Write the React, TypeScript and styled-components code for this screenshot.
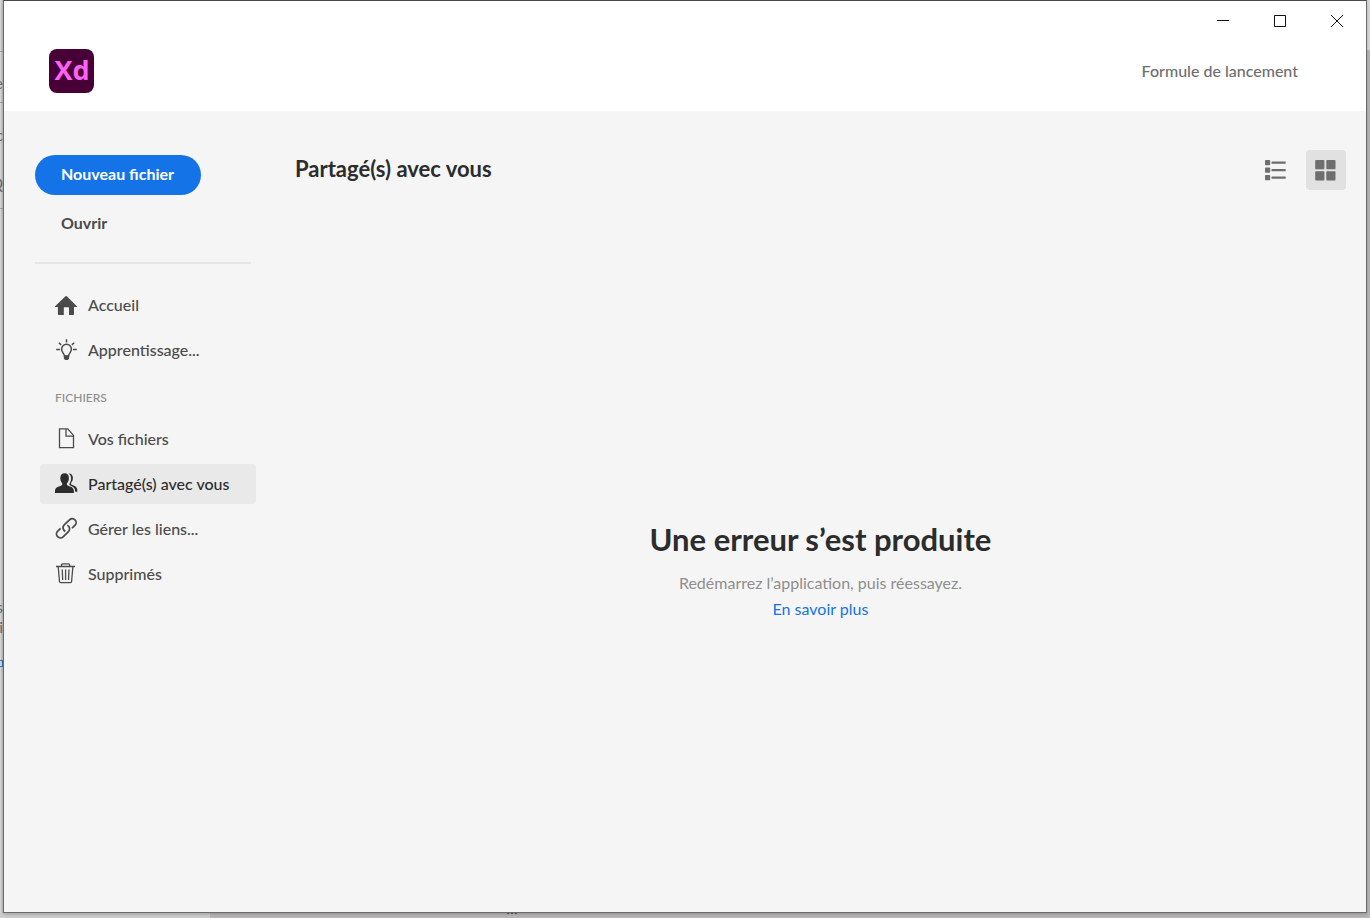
import React from 'react';
import styled, { createGlobalStyle } from 'styled-components';

const GlobalStyle = createGlobalStyle`
  *, *::before, *::after { box-sizing: border-box; }
  html, body { margin: 0; padding: 0; }
  body {
    font-family: Lato, "Open Sans", sans-serif;
    font-size: 16px;
    line-height: 20px;
    color: #4b4b4b;
  }
  button { font: inherit; color: inherit; border: 0; padding: 0; background: none; cursor: pointer; }
  h1, h2, p, ul { margin: 0; padding: 0; }
  svg { display: block; }
`;

const Desktop = styled.div`
  display: grid;
  grid-template-columns: 3px minmax(0, 1fr) 3px;
  grid-template-rows: minmax(0, 1fr) 5px;
  min-height: 100vh;
  overflow: hidden;
  background: #bdbbbc;
`;

const BehindLeft = styled.div`
  display: flex;
  flex-direction: column;
  overflow: hidden;
  background: linear-gradient(90deg, #dedede, #bfbfbf);
`;

const Slice = styled.div<{ $height: number; $line?: boolean }>`
  display: flex;
  flex: none;
  align-items: center;
  justify-content: flex-end;
  height: ${(p) => p.$height}px;
  border-bottom: ${(p) => (p.$line ? '1px solid #a3a3a3' : '0')};
  color: #6e6e6e;
  font-size: 16px;
`;

const FieldEdge = styled.div`
  flex: none;
  height: 7px;
  border: 1px solid #3d78b4;
  border-left: 0;
`;

const BehindRight = styled.div`
  background: linear-gradient(#dcdcdc 0 50px, #b9b9b9 50px);
`;

const BehindBottom = styled.div`
  grid-column: 1 / -1;
  display: flex;
  background: linear-gradient(90deg, #cecece 0 210px, #b9b7b8 210px);
`;

const Dots = styled.span`
  width: 10px;
  height: 1px;
  margin-left: 507px;
  background: repeating-linear-gradient(90deg, #555 0 2px, transparent 2px 4px);
`;

const Window = styled.div`
  display: flex;
  flex-direction: column;
  border: 1px solid #6b6b6b;
  border-top-color: #484848;
  background: #f5f5f5;
  box-shadow: 0 1px 4px rgba(0, 0, 0, 0.25);
  z-index: 1;
`;

const Header = styled.header`
  background: #fff;
`;

const WindowControls = styled.div`
  display: flex;
  justify-content: flex-end;
  height: 40px;
  padding-right: 1px;
`;

const WindowButton = styled.button`
  display: grid;
  place-items: center;
  width: 57px;
  height: 40px;
`;

const Brand = styled.div`
  display: flex;
  align-items: center;
  justify-content: space-between;
  height: 70px;
  padding: 0 68px 10px 45px;
`;

const PlanButton = styled.button`
  color: #6e6e6e;
  font-weight: 500;
`;

const Body = styled.div`
  display: flex;
  flex: 1;
`;

const Sidebar = styled.aside`
  flex: none;
  width: 252px;
  padding: 44px 0 0 31px;
`;

const NewFileButton = styled.button`
  display: block;
  height: 40px;
  padding: 0 27px 3px 26px;
  border-radius: 20px;
  background: #1473e6;
  color: #fff;
  font-weight: 700;
`;

const OpenButton = styled.button`
  display: block;
  margin: 18px 26px 29px;
  font-weight: 700;
`;

const Divider = styled.hr`
  width: 216px;
  height: 2px;
  margin: 0 0 21px;
  border: 0;
  background: #e6e6e6;
`;

const NavList = styled.ul`
  display: flex;
  flex-direction: column;
  gap: 5px;
  margin-left: 5px;
  list-style: none;
`;

const NavLink = styled.a<{ $active?: boolean }>`
  display: flex;
  align-items: center;
  gap: 10px;
  width: 216px;
  height: 40px;
  padding-left: 14px;
  border-radius: 4px;
  background: ${(p) => (p.$active ? '#e9e9e9' : 'transparent')};
  color: ${(p) => (p.$active ? '#2c2c2c' : '#4b4b4b')};
  font-weight: 500;
  text-decoration: none;
`;

const SectionLabel = styled.h2`
  margin: 18px 0 11px 20px;
  color: #8e8e8e;
  font-size: 12px;
  font-weight: 500;
  line-height: 20px;
`;

const Main = styled.main`
  display: flex;
  flex: 1;
  flex-direction: column;
  padding: 39px 20px 0 39px;
`;

const Toolbar = styled.div`
  display: flex;
  align-items: center;
  justify-content: space-between;
  height: 40px;
`;

const Title = styled.h1`
  padding-bottom: 2px;
  color: #2c2c2c;
  font-size: 22px;
  font-weight: 700;
  line-height: 28px;
`;

const ViewSwitch = styled.div`
  display: flex;
  gap: 10px;
`;

const ViewButton = styled.button<{ $active?: boolean }>`
  display: grid;
  place-items: center;
  width: 40px;
  height: 40px;
  border-radius: 4px;
  background: ${(p) => (p.$active ? '#e1e1e1' : 'transparent')};
  color: #6e6e6e;
`;

const ErrorState = styled.section`
  display: flex;
  flex: 1;
  flex-direction: column;
  align-items: center;
  justify-content: center;
  padding-top: 39px;
  text-align: center;
`;

const ErrorTitle = styled.h2`
  margin-bottom: 11px;
  color: #2c2c2c;
  font-size: 31px;
  font-weight: 700;
  line-height: 40px;
`;

const ErrorText = styled.p`
  color: #8e8e8e;
  font-size: 16px;
  line-height: 26px;
`;

const MoreLink = styled.a`
  color: #1473e6;
  line-height: 26px;
  text-decoration: none;
`;

const XdLogo = () => (
  <svg width="45" height="44" viewBox="0 0 45 44" role="img" aria-label="Adobe XD">
    <rect width="45" height="44" rx="8" fill="#470137" />
    <text x="23" y="31" textAnchor="middle" fontFamily="Open Sans, sans-serif" fontSize="27" fontWeight="700" fill="#ff61f6">Xd</text>
  </svg>
);

const Icon = ({ children }: { children: React.ReactNode }) => (
  <svg width="24" height="24" viewBox="0 0 24 24" fill="none" stroke="currentColor" strokeWidth="1.3" aria-hidden="true">
    {children}
  </svg>
);

const HomeIcon = () => (
  <Icon>
    <path
      fill="currentColor"
      stroke="none"
      d="M11.5 3.3a1 1 0 0 1 1.3 0L22.9 13.2a.5.5 0 0 1-.3.9H20v7.2a.8.8 0 0 1-.8.8H15v-7.2a.6.6 0 0 0-.6-.6h-4a.6.6 0 0 0-.6.6v7.2H4.7a.8.8 0 0 1-.8-.8v-7.2H1.4a.5.5 0 0 1-.3-.9Z"
    />
  </Icon>
);

const BulbIcon = () => (
  <Icon>
    <path strokeWidth="1.5" d="M12.5 1.3v3.2M2.200 11.5H6M19 11.5h3.800M4.800 4.700l2.400 2.200M20.200 4.700l-2.400 2.200" />
    <path strokeWidth="1.5" d="M10.500 18.200c0-2.500-2.900-3.800-2.900-7a4.900 4.900 0 0 1 9.800 0c0 3.200-2.900 4.500-2.900 7Z" />
    <path fill="currentColor" stroke="none" d="M9.900 17.300h5.200v3.200L13.800 22h-2.600l-1.300-1.500Z" />
  </Icon>
);

const FileIcon = () => (
  <Icon>
    <path d="M5.5 1.9h8.3l5.7 6.5v12.200H5.500ZM12 1.900v7.300h7.500" />
  </Icon>
);

const PeopleIcon = () => (
  <Icon>
    <path
      fill="currentColor"
      stroke="none"
      d="M10.6 1.300c2.700 0 4.300 2 4.300 4.700 0 2.300-.8 3.900-1.700 5-.6.9-.5 2 .5 2.500 2.900 1.300 6.200 1.900 6.200 5.300v2.300H1v-2.300c0-3.400 3.400-4 6.400-5.300 1-.5 1.200-1.600.6-2.500-.9-1.100-1.700-2.700-1.700-5 0-2.700 1.600-4.700 4.300-4.700Z"
    />
    <path
      fill="currentColor"
      stroke="none"
      d="M14.500 1.500c2.700-.2 4.400 1.700 4.400 4.400 0 2-.8 3.500-1.600 4.500-.6.9-.4 1.900.6 2.400 2.500 1.200 5.400 2 5.400 5.300v1.600h-2.100c.1-4-2.300-5-4.900-6.200-1-.5-1.200-1.400-.6-2.300.8-1.100 1.400-2.700 1.400-4.900 0-2-.9-3.700-2.600-4.800Z"
    />
  </Icon>
);

const LinkIcon = () => (
  <Icon>
    <g transform="translate(12.300 11.300) rotate(-44)" strokeWidth="1.800">
      <path d="M4.200 3.900H8.200a3.900 3.900 0 0 0 0-7.800H0.800a3.900 3.900 0 0 0-3.600 5.400" />
      <path d="M-4.200-3.900H-8.200a3.900 3.900 0 0 0 0 7.800H-0.800a3.900 3.900 0 0 0 3.600-5.400" />
    </g>
  </Icon>
);

const TrashIcon = () => (
  <Icon>
    <path d="M2 4.500h19M7.500 4.500V3q0-1.200 1.200-1.200h5.800q1.200 0 1.200 1.200v1.500M4.200 4.500l1.300 15q.1 1.100 1.200 1.100h9.700q1.100 0 1.200-1.100l1.300-15M8.200 7.500l.5 10.500M11.600 7.500V18M15 7.500l-.5 10.500" />
  </Icon>
);

const ListIcon = () => (
  <svg width="22" height="22" viewBox="0 0 22 22" fill="currentColor" aria-hidden="true">
    {[0, 7.5, 15].map((y) => (
      <React.Fragment key={y}>
        <rect x="0" y={y + 1} width="5.2" height="5.2" rx="0.8" />
        <rect x="6.5" y={y + 2.5} width="14.2" height="2.2" rx="0.5" />
      </React.Fragment>
    ))}
  </svg>
);

const GridIcon = () => (
  <svg width="22" height="22" viewBox="0 0 22 22" fill="currentColor" aria-hidden="true">
    <rect x="0.2" y="1" width="9.2" height="9.2" rx="0.8" />
    <rect x="11.3" y="1" width="9.2" height="9.2" rx="0.8" />
    <rect x="0.2" y="12.3" width="9.2" height="9.2" rx="0.8" />
    <rect x="11.3" y="12.3" width="9.2" height="9.2" rx="0.8" />
  </svg>
);

const ControlIcon = ({ d }: { d: string }) => (
  <svg width="12" height="12" viewBox="0 0 12 12" fill="none" stroke="#111" aria-hidden="true">
    <path d={d} />
  </svg>
);

const controls = [
  { label: 'Réduire', d: 'M0 5.5h12' },
  { label: 'Agrandir', d: 'M.5.5h11v11H.5Z' },
  { label: 'Fermer', d: 'M0 0l12 12M12 0L0 12' },
];

type NavEntry = { label: string; icon: React.ReactNode; active?: boolean };

const mainLinks: NavEntry[] = [
  { label: 'Accueil', icon: <HomeIcon /> },
  { label: 'Apprentissage...', icon: <BulbIcon /> },
];

const fileLinks: NavEntry[] = [
  { label: 'Vos fichiers', icon: <FileIcon /> },
  { label: 'Partagé(s) avec vous', icon: <PeopleIcon />, active: true },
  { label: 'Gérer les liens...', icon: <LinkIcon /> },
  { label: 'Supprimés', icon: <TrashIcon /> },
];

const Nav = ({ items }: { items: NavEntry[] }) => (
  <NavList>
    {items.map((item) => (
      <li key={item.label}>
        <NavLink href="#" $active={item.active} aria-current={item.active ? 'page' : undefined}>
          {item.icon}
          {item.label}
        </NavLink>
      </li>
    ))}
  </NavList>
);

export default function App() {
  return (
    <>
      <GlobalStyle />
      <Desktop>
        <BehindLeft aria-hidden="true">
          <Slice $height={52} $line />
          <Slice $height={11} />
          <Slice $height={40} $line>le</Slice>
          <Slice $height={64}>c</Slice>
          <Slice $height={32}>Q</Slice>
          <Slice $height={10} $line />
          <Slice $height={388} />
          <Slice $height={20}>s</Slice>
          <Slice $height={20}>li</Slice>
          <Slice $height={23} />
          <FieldEdge />
        </BehindLeft>
        <Window>
          <Header>
            <WindowControls>
              {controls.map((c) => (
                <WindowButton key={c.label} aria-label={c.label}>
                  <ControlIcon d={c.d} />
                </WindowButton>
              ))}
            </WindowControls>
            <Brand>
              <XdLogo />
              <PlanButton>Formule de lancement</PlanButton>
            </Brand>
          </Header>
          <Body>
            <Sidebar>
              <NewFileButton>Nouveau fichier</NewFileButton>
              <OpenButton>Ouvrir</OpenButton>
              <Divider />
              <nav>
                <Nav items={mainLinks} />
                <SectionLabel>FICHIERS</SectionLabel>
                <Nav items={fileLinks} />
              </nav>
            </Sidebar>
            <Main>
              <Toolbar>
                <Title>Partagé(s) avec vous</Title>
                <ViewSwitch>
                  <ViewButton aria-label="Vue en liste">
                    <ListIcon />
                  </ViewButton>
                  <ViewButton $active aria-label="Vue en grille" aria-pressed="true">
                    <GridIcon />
                  </ViewButton>
                </ViewSwitch>
              </Toolbar>
              <ErrorState>
                <ErrorTitle>Une erreur s’est produite</ErrorTitle>
                <ErrorText>Redémarrez l’application, puis réessayez.</ErrorText>
                <MoreLink href="#">En savoir plus</MoreLink>
              </ErrorState>
            </Main>
          </Body>
        </Window>
        <BehindRight />
        <BehindBottom>
          <Dots />
        </BehindBottom>
      </Desktop>
    </>
  );
}
